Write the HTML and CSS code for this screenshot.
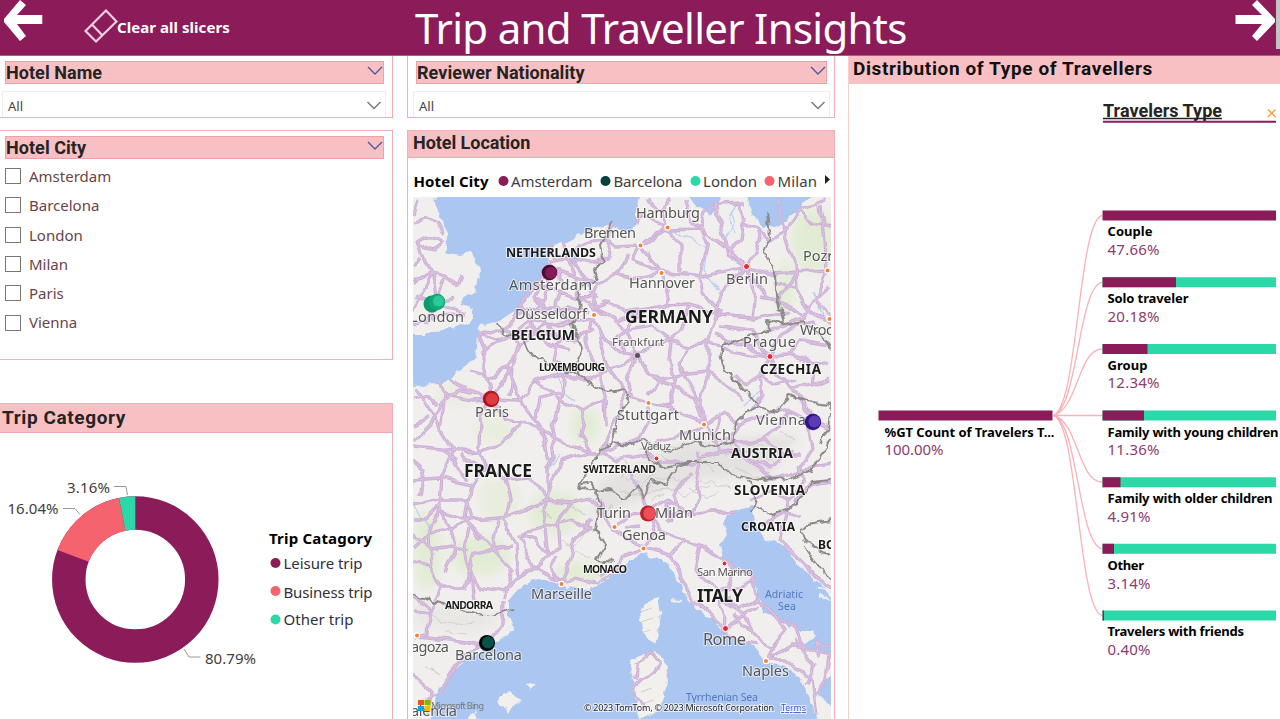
FILE: index.html
```html
<!DOCTYPE html>
<html lang="en">
<head>
<meta charset="utf-8">
<title>Trip and Traveller Insights</title>
<link rel="stylesheet" href="styles.css">
</head>
<body>
<header class="topbar">
  <svg class="arrow" width="40" height="43" viewBox="0 0 40 43"><path d="M0 19L16 0L22 5L13 15H38.300V24H13L22 36L16 41L0 22Z"/></svg>
  <div class="clear">
    <svg width="34" height="34" viewBox="0 0 34 34"><path d="M22 1.500L32.500 12.500L12 32.500L1.500 22ZM8 15.500L18.500 26.500" /></svg>
    <span>Clear all slicers</span>
  </div>
  <h1 class="title">Trip and Traveller Insights</h1>
  <svg class="arrow next" width="41" height="43" viewBox="0 0 41 43"><path d="M40 19L22 0L17 5L27 15H.500V24H27L17 36L22 41L40 22Z"/></svg>
  <div class="scroll"></div>
</header>
<main class="board">
  <div class="col left">
    <section class="panel slicer">
      <div class="bar"><h2>Hotel Name</h2><svg class="chev" width="16" height="10" viewBox="0 0 16 10"><path d="M1 1L8 8L15 1"/></svg></div>
      <div class="select"><span>All</span><svg class="chev grey" width="16" height="10" viewBox="0 0 16 10"><path d="M1.500 1L8 7.500L14.500 1"/></svg></div>
    </section>
    <section class="panel cities">
      <div class="bar"><h2>Hotel City</h2><svg class="chev" width="16" height="10" viewBox="0 0 16 10"><path d="M1 1L8 8L15 1"/></svg></div>
      <ul class="checks">
        <li><i></i>Amsterdam</li><li><i></i>Barcelona</li><li><i></i>London</li><li><i></i>Milan</li><li><i></i>Paris</li><li><i></i>Vienna</li>
      </ul>
    </section>
    <section class="panel trips">
      <h2 class="head">Trip Category</h2>
      <svg class="donut" width="392" height="286" viewBox="0 433 392 286">
        <circle cx="135.300" cy="579.500" r="66.500" fill="none" stroke="#8b1c59" stroke-width="33.500"/>
        <g fill="none" stroke-width="33.500" transform="rotate(-90 135.300 579.500)">
          <circle cx="135.300" cy="579.500" r="66.500" pathLength="100" stroke="#f5636f" stroke-dasharray="0 80.790 16.040 4"/>
          <circle cx="135.300" cy="579.500" r="66.500" pathLength="100" stroke="#2bd9a8" stroke-dasharray="0 96.840 3.160 1"/>
        </g>
        <path class="lead" d="M114 486.500H126L127.500 495M63 508.500H75L80 514.500M184 649L189 657H200.500"/>
        <g class="val"><text x="67" y="492.500" textLength="43">3.16%</text><text x="7.500" y="514" textLength="51">16.04%</text><text x="205" y="663.500" textLength="51">80.79%</text></g>
        <text class="lt" x="269" y="544" textLength="103">Trip Catagory</text>
        <g class="val dark"><text x="283.500" y="568.500" textLength="79">Leisure trip</text><text x="283.500" y="597.500" textLength="89">Business trip</text><text x="283.500" y="625" textLength="70">Other trip</text></g>
        <circle cx="275.500" cy="563" r="5" fill="#8b1c59"/><circle cx="275.500" cy="591" r="5" fill="#f5636f"/><circle cx="275.500" cy="619.500" r="5" fill="#2bd9a8"/>
      </svg>
    </section>
  </div>
  <div class="col mid">
    <section class="panel slicer">
      <div class="bar"><h2>Reviewer Nationality</h2><svg class="chev" width="16" height="10" viewBox="0 0 16 10"><path d="M1 1L8 8L15 1"/></svg></div>
      <div class="select"><span>All</span><svg class="chev grey" width="16" height="10" viewBox="0 0 16 10"><path d="M1.500 1L8 7.500L14.500 1"/></svg></div>
    </section>
    <section class="panel location">
      <h2 class="head">Hotel Location</h2>
      <svg class="legend" width="426" height="39" viewBox="408 158 426 39">
        <text class="lt" x="413.500" y="186.500" textLength="75">Hotel City</text>
        <circle cx="503.500" cy="181" r="5" fill="#8b1c59"/><circle cx="605.500" cy="181" r="5" fill="#02413c"/><circle cx="695.500" cy="181" r="5" fill="#2bd9a8"/><circle cx="769.500" cy="181" r="5" fill="#f5636f"/>
        <g class="val"><text x="511" y="186.500" textLength="81.500">Amsterdam</text><text x="613.500" y="186.500" textLength="69">Barcelona</text><text x="703" y="186.500" textLength="54">London</text><text x="777.500" y="186.500" textLength="39.500">Milan</text></g>
        <path d="M825 175L830 179.500L825 184Z" fill="#222"/>
      </svg>
      <svg class="map" width="418" height="522" viewBox="413 197 418 522">
        <defs>
          <filter id="wob" x="0" y="0" width="100%" height="100%"><feTurbulence type="fractalNoise" baseFrequency=".05" numOctaves="2" seed="4"/><feDisplacementMap in="SourceGraphic" scale="10" xChannelSelector="R" yChannelSelector="G"/></filter>
          <filter id="rough" x="0" y="0" width="100%" height="100%"><feTurbulence type="fractalNoise" baseFrequency=".11" numOctaves="2" seed="9"/><feDisplacementMap in="SourceGraphic" scale="8" xChannelSelector="R" yChannelSelector="G"/></filter>
          <filter id="soft" x="-30%" y="-30%" width="160%" height="160%"><feGaussianBlur stdDeviation="5"/></filter>
          <g id="roads">
            <path d="M413 222L428 219L437 223M417 242Q430 232 443 241L433 250L420 246ZM419 245L425 262L432 272L436 297M413 282L432 272L445 275L458 285L462 275M432 272L418 300L413 312M436 303L466 312M445 275L438 297M413 325L440 315L466 313M417 200L413 215M420 258L413 268M413 296L433 302M445 235L438 222M455 297L438 303L425 325"/>
            <path d="M548 262L552 270L535 285L522 300L512 320L500 328L478 335M548 262L570 258L590 262L612 258M552 270L575 278L598 285M552 270L545 298L530 318L508 336L482 352M548 245L555 262M562 242L568 262L575 278L577 298L590 306M535 285L555 290L577 298L598 297M520 305L530 318L548 325L570 322L590 318M530 318L535 333L552 345L572 350M508 336L530 330L552 335L575 340L592 330M548 325L560 340L555 358L570 378M535 333L520 350L505 365M478 335L485 350L483 368L490 385L491 399M478 335L495 340L508 336L520 345L510 370L491 399M535 298L545 310L560 308L577 312M545 275L536 296L548 310L546 325L528 336M558 268L562 288L556 305L568 322M512 318L530 307L552 316L568 306L588 312M570 260L586 280L595 306M500 326L515 335L530 325"/>
            <path d="M570 252L590 242L605 240L615 246L640 245L667 229L700 228L730 250L745 266M667 227L662 210L672 200M667 229L680 245L680 272M667 227L640 215L635 225M640 245L632 260L661 272L700 277L735 270L746 267M640 245L655 232L667 227M661 272L650 258L640 245M661 272L668 290L665 305L645 310L615 322M661 272L640 278L615 274L598 286M612 258L605 240L610 225M615 322L598 306L590 306M590 306L612 318L625 330L637 355M590 306L610 300L625 312L665 306L690 305L718 315L752 318L790 312M590 306L598 285L615 274L628 255M700 277L705 292L720 310L712 330L708 345L708 380L700 398L704 424M746 267L755 252L760 237L758 228L745 222L738 205M745 266L728 255L722 230L715 200M746 267L755 280L768 297L785 305L805 315M746 267L775 275L795 273L827 271M746 267L722 292L716 313M746 267L755 290L752 318M730 250L742 240L745 215M700 228L705 212L720 205L745 204M658 212L646 200M685 200L690 222L700 228L708 245L700 277"/>
            <path d="M783 231L800 210L825 200M783 228L795 265L796 290L810 310L831 325M820 205L825 240L827 271L815 300L831 318M783 231L770 240L758 228M778 197L783 231M795 273L778 300L760 297M800 210L812 225L831 228M796 288L775 282M831 285L814 300L803 318L770 330"/>
            <path d="M637 355L620 352L600 335L592 318M637 355L660 345L680 330L690 305M637 355L648 372L660 380L680 375L708 372M637 355L628 380L632 398L648 403L668 408L690 415L704 424M637 355L625 366L605 372L590 378L570 378M625 330L650 325L672 340L690 345L708 342M600 335L605 355L612 372L625 390L620 412L608 435L602 452M592 318L585 340L590 360L600 375L605 395L606 425M648 403L650 420L640 438L620 445L602 452M704 424L680 435L660 440L645 452M704 424L715 440L740 442L762 440M704 424L695 400L680 390L660 380L650 395M704 424L725 412L740 425L765 415L790 410L814 421M708 372L725 385L745 400M708 342L730 350L768 357M625 355L618 337L632 322L645 310M670 340L668 360L675 378L668 408M690 345L680 365L690 385L698 402"/>
            <path d="M770 356L752 348L735 342L716 335M770 356L775 370L790 390L805 402L814 421M770 356L790 355L815 365L831 362M770 356L760 375L745 385L735 375M770 356L780 335L795 325L815 322M790 390L812 385L831 378M815 365L812 385M770 356L750 330L720 326M790 355L800 340L831 345M760 375L762 395L752 410M760 375L775 385L795 380"/>
            <path d="M413 442L430 425L440 405L460 390L491 399M413 398L430 395L437 405M440 380L445 395L440 430L452 450L442 475L440 505L450 530M452 378L465 390L491 399L480 420L479 447L486 465L505 480M491 399L505 420L530 425L552 438L555 455L548 468L548 500M413 447L440 450L479 452L500 445L520 425M491 399L520 400L535 380L552 375L570 378M505 365L520 400L535 420L545 440L550 460M486 465L470 488L465 520L480 540M413 480L440 478L470 485M505 480L530 478L548 500L570 502L592 498M505 480L510 500L505 520L515 545L518 580M548 500L552 480L562 460L590 452L602 452M535 380L560 400L585 410L605 400M552 438L575 445L592 452M413 505L440 500L468 500L472 520L445 530L428 535M428 535L440 510L468 520L500 518L548 500M460 455L486 470M428 418L413 425M565 378L560 400L552 438M585 410L580 435L592 452M413 460L425 470L420 495M505 365L495 378L470 372M440 505L425 520L413 520M465 480L455 460L440 450M413 388L425 400L440 428M445 395L470 400L491 399M510 395L512 370M535 418L540 398L560 392"/>
            <path d="M413 550L428 535L430 565L440 588L465 588L472 578L465 555L470 530M430 565L413 560M465 588L475 555L492 548L480 535L465 520M472 578L480 587L502 592L515 580L535 568L560 582M535 568L525 550L520 535L545 528L548 500M535 568L548 555L545 530M560 582L570 560L575 540L590 520M560 582L575 578L598 584L620 565M545 528L570 520L590 528M440 588L430 610L427 635L415 637M415 637L450 640L475 645L487 642L503 625L504 600M487 642L465 655L450 675L440 690L425 700M430 610L413 595M472 578L475 600M413 675L430 690L428 715M492 548L510 545M548 555L535 540L520 535M413 535L430 548L450 545L470 552M450 530L455 548L445 572M498 520L492 548L512 570L504 598M592 498L600 510M413 610L428 612M570 502L558 520L560 545L548 555M560 582L552 570L556 555"/>
            <path d="M602 452L615 460L640 455L655 462L690 462L720 452L745 455L762 470L775 478L800 470L831 465M648 513L630 515L615 527L625 540L643 548M648 513L655 535L643 548L625 557L600 575M648 513L665 500L690 515L715 512L735 510M648 513L660 530L685 540L700 545L718 555L735 572L752 575M690 515L700 500L695 470L700 452M648 513L640 490L628 470M643 548L672 555L685 540M615 527L605 515L600 500M750 500L770 490L790 500L805 480L800 465M700 545L695 570L715 590L725 615L724 628M724 628L712 618L695 600L680 578L672 556M724 628L745 615L752 630L770 650L766 660M766 660L785 660L810 680L815 715M758 607L745 615M752 575L757 600L775 618L795 625L802 645L828 655L825 680L812 700M766 660L790 645L802 645M770 650L785 630L775 618M724 628L735 640L758 645M715 590L740 585L756 580M724 600L740 610L757 600M667 520L680 510L672 495L690 470M665 500L672 520M625 528L640 526M735 572L725 590L715 592M796 500L810 485L831 480M762 525L775 515L800 515M785 548L800 560L831 590M790 500L780 540L805 565M800 470L812 450L808 425L814 421M790 410L775 430L762 440L780 455L800 455M745 455L770 468L790 450M740 425L730 440L745 455M814 421L831 430M720 452L712 440L722 412M645 452L655 462M795 640L815 665L805 685M745 615L735 605L728 595M752 630L740 625L735 612M820 657L815 640L831 648M637 665L650 655L661 662L655 672L640 680L634 692L645 710M637 665L636 680"/>
          </g>
        </defs>
        <rect x="413" y="197" width="418" height="522" fill="#f1efed"/>
        <g filter="url(#soft)" fill="#dfeccf" opacity=".8">
          <ellipse cx="813" cy="240" rx="22" ry="32"/><ellipse cx="785" cy="290" rx="9" ry="28"/><ellipse cx="427" cy="550" rx="14" ry="40"/><ellipse cx="480" cy="555" rx="30" ry="20"/><ellipse cx="585" cy="425" rx="14" ry="18"/><ellipse cx="555" cy="512" rx="26" ry="22"/><ellipse cx="495" cy="430" rx="22" ry="14" opacity=".6"/><ellipse cx="500" cy="500" rx="20" ry="24" opacity=".6"/><ellipse cx="580" cy="572" rx="26" ry="10"/><ellipse cx="455" cy="395" rx="22" ry="12" opacity=".5"/>
        </g>
        <g filter="url(#soft)" fill="#e3e2e0"><path d="M600 480L690 440L800 435L770 475L690 480L640 500L590 520Z"/><path d="M413 600L505 615L480 632L413 625Z" opacity=".6"/></g>
        <g fill="none" stroke="#c4c2c0" stroke-width="1.200" opacity=".6" filter="url(#rough)"><path d="M610 455L630 465L622 478L645 482L655 472M660 455L680 465L700 460L715 470M620 490L640 495L665 488L685 495L710 485M725 455L750 450L775 462M780 430L795 440M700 480L730 488M600 520L612 505M570 520L590 530L575 545M430 615L450 625L475 622M425 665L440 675M640 450L668 448L690 445M655 478L680 480M735 468L760 478M570 505L585 515M575 550L592 560M540 510L552 518M560 540L575 548M690 488L705 498L720 492M650 500L665 494M745 440L765 446M445 632L468 634"/></g>
        <g fill="#abc6f1" filter="url(#rough)">
          <path d="M434 190L439 217L449 235L445 252L459 255L472 253L481 268L476 290L462 298L463 305L473 309L473 320L450 329L428 334L408 334L408 385L443 384L456 372L476 357L479 326L499 321L519 308L537 286L547 266L552 246L566 243L590 230L608 225L628 232L636 224L637 210L642 190Z"/>
          <path d="M684 190L694 202L709 216L719 203L726 190ZM745 190L752 212L762 228L780 225L803 207L814 190Z"/>
          <path d="M432 724L436 693L457 666L482 650L502 638L514 631L509 618L509 600L522 585L542 578L566 588L589 590L609 578L622 571L629 560L646 553L669 563L679 583L689 601L709 618L726 633L752 643L766 661L792 670L806 690L816 710L818 730Z"/>
          <path d="M752 506L736 511L724 518L727 535L719 545L722 560L752 576L762 610L796 630L812 630L815 637L801 646L838 658V602L819 583L796 563L791 556L784 545L766 541L756 525ZM838 672L824 680L818 695L838 710Z"/>
          <path d="M574 252L580 260L574 265L567 258Z"/>
        </g>
        <g fill="#f1f0ed" filter="url(#rough)"><path d="M639 610L657 596L661 620L654 645L641 630ZM629 660L656 651L668 666L662 710L639 718L635 690ZM496 700L512 690L521 700L510 712ZM524 683L536 685L530 690ZM466 719L474 712L478 722Z"/><path d="M670 600L682 601M817 587L838 595M820 597L838 600" stroke="#f1f0ed" stroke-width="2"/></g>
        <path d="M640 612L652 608M641 622L653 618M644 632L650 630M634 664L645 660M641 692L652 688M642 704L653 700" stroke="#d0cfcc" fill="none"/>
        <g fill="none" stroke="#b5cfee" stroke-width="1.200" filter="url(#wob)"><path d="M667 227L690 240L708 248L705 270L720 290M725 240L735 225L730 215M555 365L562 390L575 400M413 505L430 530M745 405L760 390M648 250L650 262M812 290L825 320M560 455L548 470M735 205L728 220L735 235"/></g>
        <g fill="none" stroke-linejoin="round" filter="url(#wob)">
          <use href="#roads" stroke="#cdb0d6" stroke-width="3.300"/>
          <use href="#roads" stroke="#d9c2e0" stroke-width="1.200"/>
        </g>
        <g fill="none" stroke="#8c8989" stroke-width="1.900" stroke-linejoin="round" filter="url(#rough)">
          <path d="M612 222L600 245L603 262L594 270L597 280L578 290L580 310L572 325L578 338L583 350L575 362M499 322L502 334L520 338L532 355L545 362L556 368L580 375L595 385L608 392L622 390M575 362L580 375M622 390L630 396L618 415L612 445L600 448L596 460L582 478L580 488L596 490L600 505L595 528L605 545L596 560L614 562M582 484L592 482L597 492L610 490L625 500L638 485L645 498L652 480L665 485L675 470L690 462M612 443L630 445L642 440L655 446L670 452L690 442L715 447L732 442L736 422L748 412M645 446L648 460L665 468L690 462L718 462L732 475L760 480L790 478L812 470L820 455L831 440M767 212L770 236L764 252L776 275L778 296L784 325L805 322L820 335L831 348M784 325L768 320L770 328L745 338L722 345L720 355L726 372L745 390L758 406L775 412L790 396L812 402L831 404M748 412L758 406M831 404L828 430L820 442M752 512L756 500L748 480M756 506L770 515L790 508L802 495L812 482L831 480M831 520L808 524L802 530L806 540L818 550L831 555M804 545L820 570L831 580M413 595L440 603L465 612L490 616L514 610"/>
        </g>
        <g stroke="#fff" stroke-width="1.200" fill="#f58231"><circle cx="667.500" cy="227.500" r="2.600"/><circle cx="640.500" cy="245.500" r="2.600"/><circle cx="661.500" cy="273" r="2.600"/><circle cx="594" cy="315" r="2.600"/><circle cx="648.500" cy="403" r="2.600"/><circle cx="704" cy="424.500" r="2.600"/><circle cx="827.500" cy="270.500" r="2.600"/><circle cx="829.500" cy="319" r="2.600"/><circle cx="614.500" cy="527" r="2.600"/><circle cx="643.500" cy="548.500" r="2.600"/><circle cx="561.500" cy="584" r="2.600"/><circle cx="417" cy="635.500" r="2.600"/><circle cx="766" cy="661" r="2.600"/></g>
        <g stroke="#fff" fill="#e8292f"><circle cx="746.500" cy="266.500" r="3"/><circle cx="770" cy="356.500" r="3"/><circle cx="725.500" cy="628.500" r="3"/><circle cx="656.500" cy="458.500" r="2.400"/><circle cx="724.500" cy="563.500" r="2.400"/></g><circle cx="637.500" cy="355.500" r="2.500" fill="#555"/>
        <g class="city">
          <text x="636" y="218" textLength="64">Hamburg</text><text x="584" y="238" textLength="52">Bremen</text><text x="629" y="288" textLength="66">Hannover</text><text x="726" y="284" textLength="42">Berlin</text><text x="803" y="261">Pozr</text><text x="800" y="335" textLength="33">Wroc</text><text x="509" y="290" textLength="83">Amsterdam</text><text x="515" y="319" textLength="72">Düsseldorf</text><text x="410" y="322" textLength="54">London</text><text x="743" y="347" textLength="53">Prague</text><text class="s" x="612" y="346" textLength="52">Frankfurt</text><text x="475" y="417" textLength="34">Paris</text><text x="617" y="420" textLength="62">Stuttgart</text><text x="679" y="440" textLength="52">Munich</text><text x="756" y="425" textLength="50">Vienna</text><text class="s" x="641" y="450" textLength="30">Vaduz</text><text x="597" y="518" textLength="34">Turin</text><text x="655" y="518" textLength="38">Milan</text><text x="622" y="540" textLength="44">Genoa</text><text x="531" y="599" textLength="61">Marseille</text><text class="s" x="697" y="576" textLength="56">San Marino</text><text x="703" y="645" textLength="43" class="b">Rome</text><text x="742" y="676" textLength="47">Naples</text><text x="455" y="660" textLength="67">Barcelona</text><text x="411" y="652" textLength="38">agoza</text><text x="411" y="716" textLength="46">alencia</text>
        </g>
        <g class="nation"><text x="506" y="257" textLength="90">NETHERLANDS</text><text class="l" x="625" y="323" textLength="88">GERMANY</text><text x="511" y="340" textLength="64" class="m">BELGIUM</text><text class="t" x="539" y="371" textLength="66">LUXEMBOURG</text><text x="760" y="374" textLength="61" class="c">CZECHIA</text><text class="l" x="464" y="477" textLength="68">FRANCE</text><text x="731" y="458" textLength="62" class="m">AUSTRIA</text><text class="t" x="583" y="473" textLength="73">SWITZERLAND</text><text x="734" y="495" textLength="71" class="c">SLOVENIA</text><text x="741" y="531" textLength="54" class="n">CROATIA</text><text x="818" y="549" class="n">BO</text><text class="t" x="583" y="573" textLength="44">MONACO</text><text class="t" x="445" y="609" textLength="48">ANDORRA</text><text class="l" x="697" y="602" textLength="46">ITALY</text></g>
        <g class="water"><text x="765" y="598" textLength="38">Adriatic</text><text x="778" y="610" textLength="18">Sea</text><text x="686" y="701" textLength="72">Tyrrhenian Sea</text></g>
        <g stroke-width="1"><circle cx="549.500" cy="272.500" r="7.800" fill="#4c0b32"/><circle cx="551" cy="273" r="6" fill="#861a56"/><circle cx="432" cy="304" r="8.500" fill="#0b9b6d"/><circle cx="437" cy="302" r="8.200" fill="#12a777"/><circle cx="438.500" cy="301" r="6" fill="#2bca98" stroke="#16a878"/><circle cx="491" cy="399" r="8.200" fill="#b0131c"/><circle cx="492" cy="399" r="6" fill="#df3c42"/><circle cx="813" cy="422" r="8.200" fill="#31138a"/><circle cx="814.500" cy="421.500" r="6" fill="#5c3cb4"/><circle cx="648" cy="513.500" r="8" fill="#b9242c"/><circle cx="649.500" cy="513.500" r="6.200" fill="#ed4f57"/><circle cx="487" cy="643" r="8" fill="#020606"/><circle cx="488" cy="642.500" r="6" fill="#07524a"/></g>
        <path d="M418 700h6v5h-6z" fill="#f25022"/><path d="M424.500 700h6v5h-6z" fill="#7fba00"/><path d="M418 706h6v5h-6z" fill="#00a4ef"/><path d="M424.500 706h6v5h-6z" fill="#ffb900"/>
        <g class="credit"><text x="431" y="709" textLength="53" class="bing">Microsoft Bing</text><text x="584" y="711" textLength="190">© 2023 TomTom, © 2023 Microsoft Corporation</text><text class="terms" x="781" y="711" textLength="25">Terms</text></g>
      </svg>
    </section>
  </div>
  <section class="col right">
    <h2 class="head">Distribution of Type of Travellers</h2>
    <svg class="tree" width="431" height="635" viewBox="849 84 431 635">
      <text class="field" x="1103" y="117" textLength="119">Travelers Type</text>
      <path d="M1103 118.500H1222" stroke="#222" stroke-width="1.500"/><path d="M1103 121.800H1276" stroke="#8b1c59" stroke-width="2"/>
      <path d="M1268 109.500L1275.500 117M1275.500 109.500L1268 117" stroke="#f2a23a" stroke-width="1.400"/>
      <g fill="none" stroke="#f5636f" stroke-opacity=".5" stroke-width="1.300"><path d="M1053 415.500C1078 410 1078 221 1102 215.500M1053 415.500C1078 410 1078 287 1102 282.200M1053 415.500C1078 410 1078 349 1102 349M1053 415.500H1102M1053 415.500C1078 420 1078 482 1102 482M1053 415.500C1078 420 1078 544 1102 548.800M1053 415.500C1078 420 1078 610 1102 615.500"/></g>
      <g fill="#2bd9a8"><path d="M1102.500 277.200h173.500v10h-173.500zM1102.500 344h173.500v10h-173.500zM1102.500 410.500h173.500v10h-173.500zM1102.500 477.200h173.500v10h-173.500zM1102.500 543.800h173.500v10h-173.500zM1102.500 610.500h173.500v10h-173.500z"/></g>
      <g fill="#8b1c59"><path d="M878.500 410.500h174v10h-174zM1102.500 210.500h173.500v10h-173.500zM1102.500 277.200h73.500v10h-73.500zM1102.500 344h45v10h-45zM1102.500 410.500h41.500v10h-41.500zM1102.500 477.200h18v10h-18zM1102.500 543.800h11.500v10h-11.500zM1102.500 610.500h1.500v10h-1.500z"/></g>
      <g class="name"><text x="884.500" y="436.500" textLength="170">%GT Count of Travelers T...</text><text x="1107.500" y="236" textLength="45">Couple</text><text x="1107.500" y="303.300" textLength="81">Solo traveler</text><text x="1107.500" y="369.500" textLength="40">Group</text><text x="1107.500" y="436.500" textLength="171">Family with young children</text><text x="1107.500" y="503" textLength="165">Family with older children</text><text x="1107.500" y="570" textLength="36.500">Other</text><text x="1107.500" y="636" textLength="136.500">Travelers with friends</text></g>
      <g class="pct"><text x="884.500" y="455" textLength="59">100.00%</text><text x="1107.500" y="255" textLength="52">47.66%</text><text x="1107.500" y="322" textLength="52">20.18%</text><text x="1107.500" y="388" textLength="52">12.34%</text><text x="1107.500" y="455" textLength="52">11.36%</text><text x="1107.500" y="521.500" textLength="43">4.91%</text><text x="1107.500" y="588.500" textLength="43">3.14%</text><text x="1107.500" y="654.500" textLength="43">0.40%</text></g>
    </svg>
  </section>
</main>
</body>
</html>
```
FILE: styles.css
```css
* { box-sizing: border-box; }
body { margin: 0; width: 1280px; height: 719px; overflow: hidden; background: #fff; font-family: "Noto Sans", "Open Sans", sans-serif; }
svg { display: block; flex: none; }
h1, h2, ul { margin: 0; padding: 0; }

.topbar { display: flex; height: 56px; background: #8b1c59; color: #fff; align-items: flex-start; padding-left: 4px; border-bottom: 1px solid #b0568a; }
.arrow { fill: #fff; }
.clear { display: flex; width: 371px; padding: 9px 0 0 40px; font-weight: 700; font-size: 15px; line-height: 36px; letter-spacing: .05px; }
.clear svg { fill: none; stroke: #ecd0e0; stroke-width: 2.200; }
.clear span { margin-left: -1px; white-space: nowrap; }
.title { font-weight: 400; font-size: 42px; line-height: 56px; width: 820px; white-space: nowrap; letter-spacing: -.7px; }
.scroll { width: 4px; height: 49px; background: #c4c4c4; }

.board { display: grid; grid-template-columns: 393px 428px 432px; column-gap: 14px; height: 663px; }
.right { margin-left: -1px; width: 432px; border-left: 1px solid #f9ccd1; }
.col { display: flex; flex-direction: column; min-width: 0; height: 663px; }
.panel { border: 1px solid #f7adb5; flex: none; }
.left .panel { border-left: 0; }
h2 { font-family: Roboto, sans-serif; font-weight: 700; font-size: 18px; color: #252423; white-space: nowrap; letter-spacing: .05px; }
.bar { display: flex; justify-content: space-between; height: 23px; background: #f9c0c4; border: 1px solid #f2a0a8; align-items: center; }
.bar h2 { line-height: 22px; }
.bar .chev { margin-top: -3px; }
.chev { fill: none; stroke: #4d5aa0; stroke-width: 1.400; }
.chev.grey { stroke: #777; }
.slicer { height: 62px; border-top: 0; margin-bottom: 12px; }
.slicer .bar { margin: 5px 8px 7px 5px; }
.mid .slicer .bar { margin-left: 8px; margin-right: 7px; }
.select { display: flex; justify-content: space-between; align-items: center; height: 26px; margin: 0 6px 0 2px; padding: 2px 3px 0 5px; border: 1px solid #eee; border-bottom: 0; font-size: 13px; color: #444; }
.mid .select { margin: 0 4px 0 5px; }
.cities { height: 230px; margin-bottom: 43px; }
.cities .bar { margin: 5px 8px 3px 5px; }
.checks { list-style: none; font-size: 15px; color: #694349; }
.checks li { display: flex; height: 29.300px; line-height: 29.300px; gap: 8px; padding: 0 0 0 5px; align-items: center; }
.checks i { width: 16px; height: 16px; border: 1px solid #777; margin-bottom: 1px; }
.trips { height: 330px; }
.head { background: #f9c0c4; border-bottom: 1px solid #f5a5ae; }
.trips .head { height: 29px; line-height: 27px; padding-left: 2px; font-size: 19px; letter-spacing: .6px; }
.location { height: 600px; }
.location .head { height: 27px; line-height: 24px; padding-left: 5px; letter-spacing: -.05px; }
.right .head { height: 28px; line-height: 25px; padding-left: 4px; font-size: 19px; letter-spacing: .62px; color: #111; border-bottom: 0; flex: none; }
.map { margin-left: 5px; overflow: hidden; }

.lead { fill: none; stroke: #999; }
.val { font-size: 15px; fill: #3f3d3d; }
.dark { fill: #303040; }
.lt { font-size: 15px; font-weight: 700; fill: #000; }
.city { font-size: 14.500px; fill: #555; paint-order: stroke; stroke: rgba(255, 255, 255, .6); stroke-width: 2px; }
.city .s { font-size: 11.500px; }
.city .b { font-size: 16.500px; }
.nation { font-size: 12.500px; font-weight: 700; fill: #1a1a1a; paint-order: stroke; stroke: rgba(255, 255, 255, .65); stroke-width: 2px; }
.nation .l { font-size: 17.500px; }
.nation .m { font-size: 14px; }
.nation .c { font-size: 13.500px; }
.nation .n { font-size: 12px; }
.nation .t { font-size: 10.500px; }
.water { font-size: 10.500px; fill: #5577c0; }
.credit { font-size: 9px; fill: #222; paint-order: stroke; stroke: rgba(255, 255, 255, .7); stroke-width: 2px; }
.bing { fill: #777; stroke: none; }
.terms { fill: #3d5fc0; text-decoration: underline; }
.field { font-family: Roboto, sans-serif; font-weight: 700; font-size: 18px; fill: #252423; }
.name { font-size: 13px; font-weight: 700; fill: #000; }
.pct { font-size: 15px; fill: #8b3c70; }
```
